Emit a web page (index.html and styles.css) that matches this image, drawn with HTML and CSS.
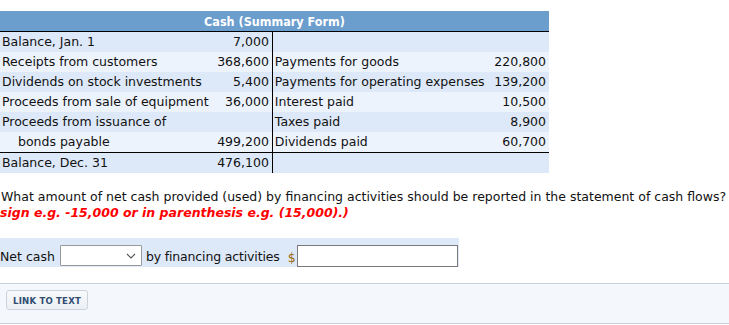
FILE: index.html
```html
<!DOCTYPE html>
<html>
<head>
<meta charset="utf-8">
<link rel="stylesheet" href="styles.css">
</head>
<body>
<table class="cash">
  <thead>
    <tr><th colspan="4" class="title">Cash (Summary Form)</th></tr>
  </thead>
  <tbody>
    <tr class="d"><td class="lbl">Balance, Jan. 1</td><td class="amt sep">7,000</td><td></td><td></td></tr>
    <tr class="l"><td class="lbl">Receipts from customers</td><td class="amt sep">368,600</td><td class="lbl">Payments for goods</td><td class="amt">220,800</td></tr>
    <tr class="d"><td class="lbl">Dividends on stock investments</td><td class="amt sep">5,400</td><td class="lbl">Payments for operating expenses</td><td class="amt">139,200</td></tr>
    <tr class="l"><td class="lbl">Proceeds from sale of equipment</td><td class="amt sep">36,000</td><td class="lbl">Interest paid</td><td class="amt">10,500</td></tr>
    <tr class="d"><td class="lbl">Proceeds from issuance of</td><td class="amt sep"></td><td class="lbl">Taxes paid</td><td class="amt">8,900</td></tr>
    <tr class="l"><td class="lbl indent">bonds payable</td><td class="amt sep">499,200</td><td class="lbl">Dividends paid</td><td class="amt">60,700</td></tr>
    <tr class="d total"><td class="lbl">Balance, Dec. 31</td><td class="amt sep">476,100</td><td></td><td></td></tr>
  </tbody>
</table>

<div class="question">
  <div class="q-line">What amount of net cash provided (used) by financing activities should be reported in the statement of cash flows?</div>
  <div class="q-line red">sign e.g. -15,000 or in parenthesis e.g. (15,000).)</div>
</div>

<div class="answer">
  <span class="txt">Net cash</span>
  <span class="select"><svg width="10" height="6" viewBox="0 0 10 6"><path d="M1 1 L5 5 L9 1" fill="none" stroke="#555" stroke-width="1.1"/></svg></span>
  <span class="txt narrow">by financing activities</span>
  <span class="dollar">$</span>
  <span class="input"></span>
</div>

<div class="footer">
  <button class="link-btn">LINK TO TEXT</button>
</div>
</body>
</html>
```

FILE: styles.css
```css
html, body {
  margin: 0;
  padding: 0;
  background: #fff;
  font-family: "DejaVu Sans", Verdana, sans-serif;
  font-size: 12.5px;
  color: #111;
  overflow: hidden;
}

.cash {
  margin-top: 11px;
  width: 549px;
  border-collapse: collapse;
  border-spacing: 0;
}

.cash .title {
  background: #6b9ecd;
  color: #fff;
  font-family: "DejaVu Sans Condensed", "DejaVu Sans", sans-serif;
  font-weight: bold;
  font-size: 12.5px;
  height: 20px;
  padding: 0;
  text-align: center;
  border-bottom: 1px solid #000;
}

.cash td {
  height: 20px;
  padding: 0 3px 0 2px;
  white-space: nowrap;
  line-height: 20px;
}

.cash tr.d td { background: #dde8f8; }
.cash tr.l td { background: #edf3fd; }
.cash tr.total td { border-top: 1px solid #000; }

.cash td.lbl { text-align: left; }
.cash td.amt { text-align: right; }
.cash td.sep { border-right: 1px solid #000; width: 50px; }
.cash td.indent { padding-left: 18px; }

.question {
  margin-top: 16px;
}

.q-line {
  white-space: nowrap;
  line-height: 16px;
  padding-left: 1px;
}

.q-line.red {
  color: #f00;
  font-weight: bold;
  font-style: italic;
  padding-left: 0;
}

.answer {
  margin-top: 17px;
  width: 459px;
  height: 29px;
  background: #dde8f8;
  display: flex;
  align-items: flex-end;
  box-sizing: border-box;
  padding-bottom: 0;
  white-space: nowrap;
}

.answer > * { flex-shrink: 0; }

.answer .txt {
  line-height: 17px;
  padding-bottom: 2px;
}

.answer .narrow { letter-spacing: -0.15px; }

.select {
  display: flex;
  align-items: center;
  justify-content: flex-end;
  width: 82px;
  height: 21px;
  box-sizing: border-box;
  border: 1px solid #999;
  background: #fff;
  margin: 0 4px 1px 5px;
  padding-right: 5px;
  border-radius: 1px;
}

.dollar {
  margin-left: 8px;
  color: #9a6a10;
  line-height: 17px;
  padding-bottom: 1px;
}

.input {
  width: 161px;
  height: 22px;
  box-sizing: border-box;
  border: 1px solid #7a7a7a;
  background: #fff;
  margin-left: 1px;
}

.footer {
  margin-top: 16px;
  height: 41px;
  border-top: 1px solid #c8d0dd;
  border-bottom: 1px solid #c8d0dd;
  background: #f4f7fb;
  box-sizing: border-box;
  padding: 6px 0 0 6px;
}

.link-btn {
  font-family: "DejaVu Sans Condensed", "DejaVu Sans", sans-serif;
  font-weight: bold;
  font-size: 9.5px;
  color: #2f4d73;
  background: linear-gradient(#f8f9fb, #eceff3);
  border: 1px solid #cdd3dc;
  border-radius: 3px;
  height: 20px;
  width: 82px;
  padding: 0;
  letter-spacing: 0.2px;
}
```
